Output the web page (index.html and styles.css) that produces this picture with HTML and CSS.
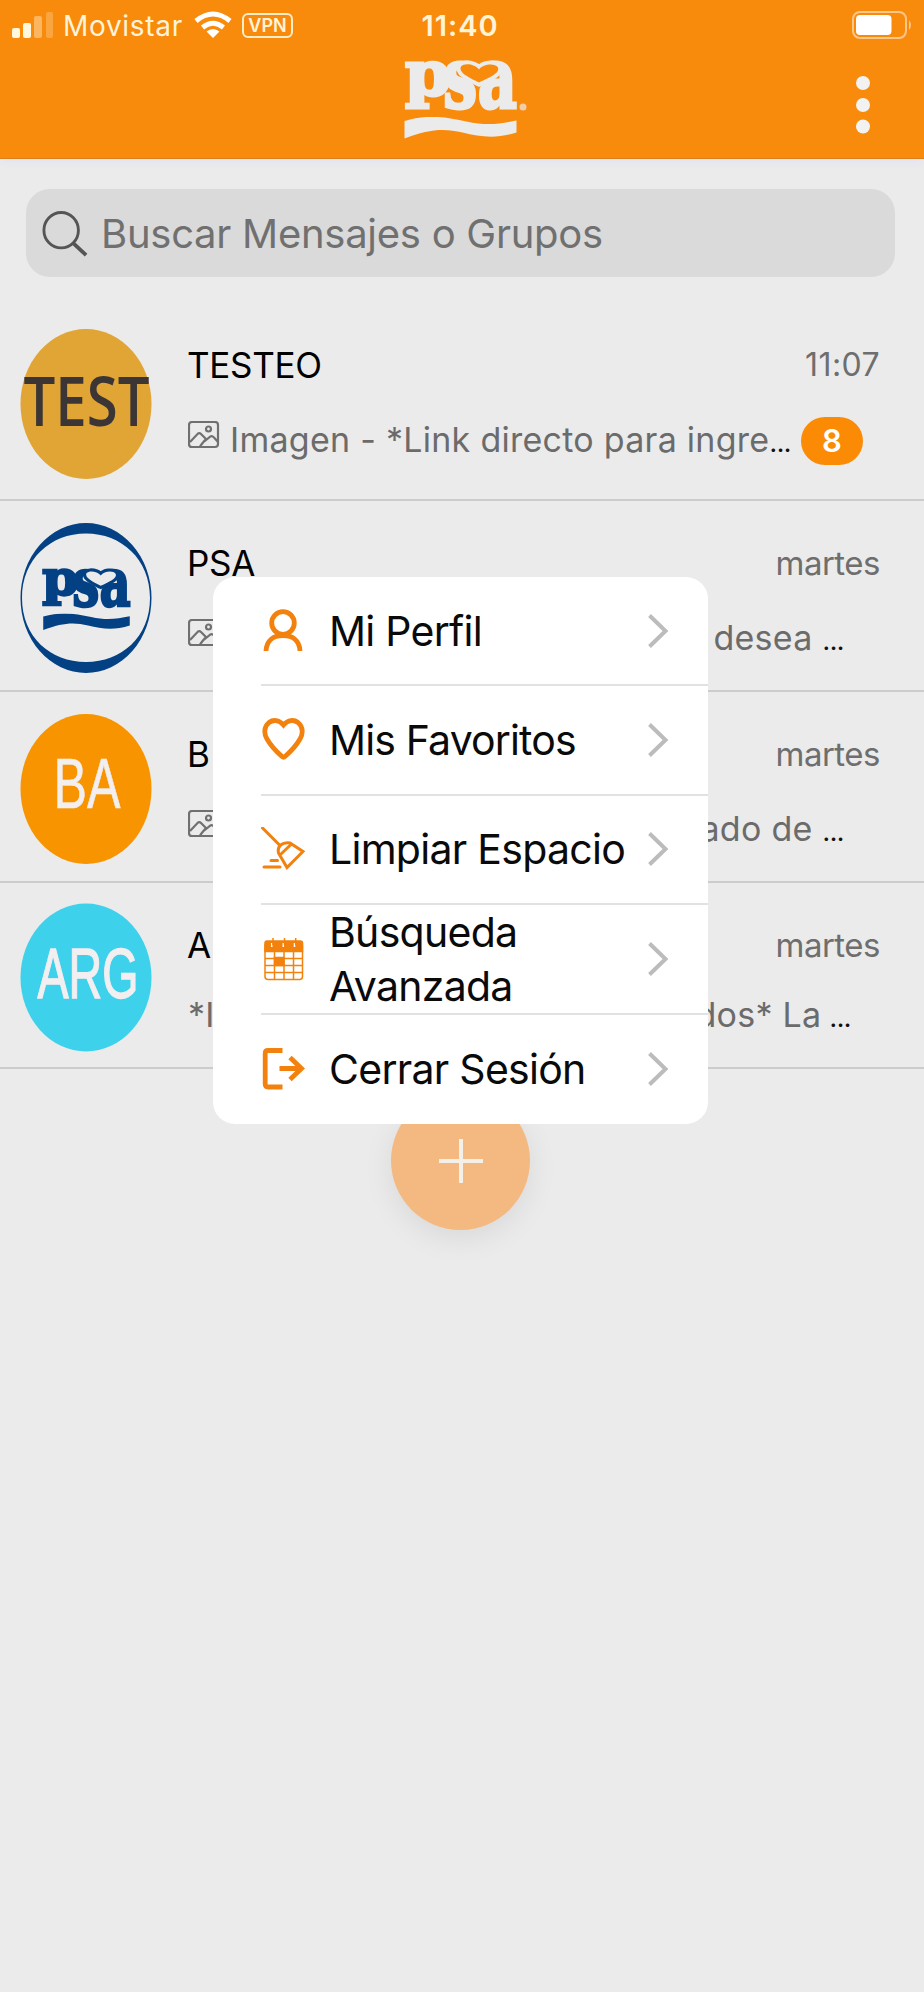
FILE: index.html
```html
<!DOCTYPE html>
<html lang="es">
<head>
<meta charset="utf-8">
<title>Mensajes</title>
<link rel="stylesheet" href="styles.css">
</head>
<body>
<svg width="0" height="0" class="defs">
  <symbol id="wave" viewBox="0 0 112 22"><path d="M0 4C22 -3 42 0 62 4.500S95 7 112 3.500V15.500C92 22 76 20 58 15.500S24 12 0 21.500Z"/></symbol>
  <symbol id="picture" viewBox="0 0 32 28"><g fill="none" stroke="#707070" stroke-width="2.200"><rect x="1" y="1" width="29" height="25" rx="3"/><circle cx="20.500" cy="8" r="2.500"/><path d="M2 21L10 12.500Q11.500 11.500 13 13L18 18L15 21.500Q13 24 12 25.500M15 21.500L22.500 15.500Q24 14.500 26 16.500L30 21"/></g></symbol>
  <symbol id="chevron" viewBox="0 0 22 36"><path d="M2.500 2.500L18.500 18L2.500 33.500" fill="none" stroke="#bcbcbc" stroke-width="4"/></symbol>
</svg>
<div class="screen">
  <header class="header">
    <div class="status">
      <div class="status-left">
        <svg class="signal" width="41" height="26" fill="#fff8dc"><rect y="16" width="8" height="10" rx="2"/><rect x="11" y="11" width="8" height="15" rx="2"/><rect x="22" y="4" width="8" height="22" rx="2" opacity=".4"/><rect x="34" y="0" width="7" height="26" rx="2" opacity=".25"/></svg>
        <span class="carrier">Movistar</span>
        <svg class="wifi" width="38" height="28" viewBox="0 0 38 28" fill="none" stroke="#fff" stroke-width="5"><path d="M2 10Q19 -4 36 10"/><path d="M8.500 16.500Q19 8 29.500 16.500"/><path d="M19 27L12.500 20.500Q19 15.500 25.500 20.500Z" fill="#fff" stroke="none"/></svg>
        <span class="vpn">VPN</span>
      </div>
      <span class="clock">11:40</span>
      <svg class="battery" width="59" height="28" viewBox="0 0 59 28"><rect x="1" y="1" width="53" height="26" rx="7" fill="none" stroke="#ffc68a" stroke-width="2"/><rect x="4" y="4" width="35.500" height="20" rx="4" fill="#fff"/><path d="M57 9Q61 14 57 19Z" fill="#ffc68a"/></svg>
    </div>
    <div class="brand">
      <svg class="logo" width="124" height="80" viewBox="0 0 124 80" fill="#ebebeb">
        <g class="wordmark light" transform="translate(0 -1.500)">
          <text class="p" x="1" y="37" textLength="46" lengthAdjust="spacingAndGlyphs">p</text>
          <text class="sa" x="39" y="50" textLength="74" lengthAdjust="spacingAndGlyphs">sa</text>
          <path class="heart" d="M75 25C65 20 54 15 57 9C61 5 71 7 75 12C79 7 90 5 94 10C96 16 85 20 75 25Z"/>
        </g>
        <circle cx="119" cy="48" r="3.500" opacity=".7"/>
        <use href="#wave" x="0" y="58" width="113" height="22"/>
      </svg>
      <svg class="dots" width="16" height="60" fill="#f2f2f2"><circle cx="8" cy="8" r="7"/><circle cx="8" cy="30" r="7"/><circle cx="8" cy="51.500" r="7"/></svg>
    </div>
  </header>

  <div class="search">
    <svg width="46" height="46" viewBox="0 0 48 48" fill="none" stroke="#555" stroke-width="3"><ellipse cx="20" cy="20" rx="18" ry="18.500"/><path d="M32 33L46 46" stroke-width="4"/></svg>
    <span class="placeholder">Buscar Mensajes o Grupos</span>
  </div>

  <main class="list">
    <article class="row first">
      <svg class="avatar" viewBox="0 0 131 150"><ellipse cx="65.500" cy="75" rx="65.500" ry="75" fill="#e0a535"/><text class="av-test" x="3" y="97" textLength="126" lengthAdjust="spacingAndGlyphs">TEST</text></svg>
      <div class="body">
        <div class="top"><span class="name">TESTEO</span><time class="hour">11:07</time></div>
        <div class="preview"><svg class="pic"><use href="#picture"/></svg><span class="message">Imagen - *Link directo para ingre<b>...</b></span><span class="badge">8</span></div>
      </div>
    </article>
    <article class="row">
      <svg class="avatar" viewBox="0 0 131 150"><path fill="#034184" fill-rule="evenodd" d="M65.500 0A65.500 75 0 0 1 65.500 150A65.500 75 0 0 1 65.500 0ZM65.500 10.500C30 10.500 1.500 36 1.500 75S30 139 65.500 139S129.500 114 129.500 75S101 10.500 65.500 10.500Z"/>
        <g class="wordmark navy" transform="translate(21 43) scale(.79)">
          <text class="p" x="1" y="37" textLength="46" lengthAdjust="spacingAndGlyphs">p</text>
          <text class="sa" x="39" y="50" textLength="74" lengthAdjust="spacingAndGlyphs">sa</text>
          <path class="heart" d="M75 25C65 20 54 15 57 9C61 5 71 7 75 12C79 7 90 5 94 10C96 16 85 20 75 25Z"/>
        </g>
        <use href="#wave" x="21" y="90.500" width="90" height="17" fill="#034184"/>
      </svg>
      <div class="body">
        <div class="top"><span class="name">PSA</span><time>martes</time></div>
        <div class="preview"><svg class="pic"><use href="#picture"/></svg><span class="tail">desea <b>...</b></span></div>
      </div>
    </article>
    <article class="row">
      <svg class="avatar" viewBox="0 0 131 150"><ellipse cx="65.500" cy="75" rx="65.500" ry="75" fill="#f79400"/><text class="av-thin" x="33" y="94" textLength="67" lengthAdjust="spacingAndGlyphs">BA</text></svg>
      <div class="body">
        <div class="top"><span class="name">B</span><time>martes</time></div>
        <div class="preview"><svg class="pic"><use href="#picture"/></svg><span class="tail">ado de <b>...</b></span></div>
      </div>
    </article>
    <article class="row last">
      <svg class="avatar" viewBox="0 0 131 150"><ellipse cx="65.500" cy="74.500" rx="65.500" ry="74" fill="#3dd1eb"/><text class="av-thin bold" x="17" y="94.500" textLength="101" lengthAdjust="spacingAndGlyphs">ARG</text></svg>
      <div class="body">
        <div class="top"><span class="name">A</span><time>martes</time></div>
        <div class="preview"><span>*I</span><span class="tail">dos* La<b class="close">...</b></span></div>
      </div>
    </article>
  </main>

  <button class="fab" aria-label="Nuevo"><svg width="46" height="46" stroke="#f4efe9" stroke-width="4"><path d="M1 23H45M23 1V45"/></svg></button>

  <nav class="menu">
    <a class="item"><svg class="icon" viewBox="0 0 44 44"><circle cx="22" cy="14" r="11.300"/><path d="M5 42C5.500 31 13 26.500 22 26.500S38.500 31 39 42"/></svg><span class="label">Mi Perfil</span><svg class="chev"><use href="#chevron"/></svg></a>
    <a class="item"><svg class="icon" viewBox="0 0 44 44"><path d="M22.500 7C18 1.500 12 1.500 8 4.500C2.500 9 3 16 6 21C10 28 17 35 21 38.500Q22.500 39.800 24 38.500C28 35 35 28 39 21C42 16 42.500 9 37 4.500C33 1.500 27 1.500 22.500 7Z"/></svg><span class="label tight">Mis Favoritos</span><svg class="chev"><use href="#chevron"/></svg></a>
    <a class="item"><svg class="icon thin" viewBox="0 0 44 44"><path d="M1.500 1L19 18.500M17.500 26C16 19 21 15 29 16L42 24.500L26 40.500ZM19.500 27.500L30.500 17M10 33.500H16.500M3 40H19"/></svg><span class="label">Limpiar Espacio</span><svg class="chev"><use href="#chevron"/></svg></a>
    <a class="item"><svg class="icon cal" viewBox="0 0 44 44"><rect x="4" y="6" width="37.500" height="36.500" rx="3"/><path class="solid" d="M4 14.500V6Q4 4 6 4H39.500Q41.500 4 41.500 6V14.500Z"/><path d="M4 21.500H41.500M4 28.500H41.500M4 35.500H41.500M13.500 14V42M23 14V42M32.500 14V42"/><rect class="solid" x="13.500" y="20.500" width="9.500" height="8"/><path class="rings" d="M10.700 6V10M22.300 6V10M33.500 6V10"/><path d="M12 1V8M23.500 1V8M34.700 1V8"/></svg><span class="label">Búsqueda<br>Avanzada</span><svg class="chev"><use href="#chevron"/></svg></a>
    <a class="item"><svg class="icon" viewBox="0 0 44 44"><path d="M21.500 3.500H7Q4.200 3.500 4.200 6.500V37Q4.200 40 7 40H21.500M18.500 21.500H40M29 10.500L40.500 21.500L29 32.500"/></svg><span class="label">Cerrar Sesión</span><svg class="chev"><use href="#chevron"/></svg></a>
  </nav>
</div>
</body>
</html>
```
FILE: styles.css
```css
* { box-sizing: border-box; }
body { margin: 0; background: #fff; font-family: Inter, "Liberation Sans", sans-serif; }
svg { display: block; flex: none; }
.defs { position: absolute; }
.screen { position: relative; width: 924px; height: 1992px; background: #ebebeb; overflow: hidden; }

.header { height: 159px; background: #f88a0c; border-bottom: 1px solid #dd7f1c; box-shadow: 0 3px 8px #e2e2f2; }
.status { display: grid; grid-template-columns: 1fr auto 1fr; align-items: center; height: 52px; padding: 0 13px 2px 12px; color: #fff3d8; }
.status-left { display: flex; align-items: center; }
.carrier { margin: 2px 0 0 10px; width: 120px; font-size: 28px; line-height: 34px; letter-spacing: .7px; white-space: nowrap; }
.wifi { margin-left: 11px; }
.vpn { margin-left: 10px; width: 51px; height: 25px; border: 2px solid #ffedc8; border-radius: 6px; font-size: 18px; font-weight: 600; line-height: 22px; text-align: center; }
.clock { margin: 2px 3px 0 0; font-size: 29px; font-weight: 600; line-height: 34px; letter-spacing: 1px; }
.battery { justify-self: end; }
.brand { display: grid; grid-template-columns: 1fr auto 1fr; padding: 7px 53px 0 53px; }
.logo { grid-column: 2; margin-left: 7px; overflow: visible; }
.dots { justify-self: end; margin-top: 16px; }
.wordmark { stroke-width: 3; font-family: "DejaVu Serif", serif; font-weight: bold; }
.wordmark.light { fill: #ebebeb; stroke: #ebebeb; }
.wordmark.navy { fill: #034184; stroke: #034184; }
.wordmark .p { font-size: 62px; }
.wordmark .sa { font-size: 86px; }
.wordmark .heart { stroke-width: 8; paint-order: stroke; }
.light .heart { fill: #f88a0c; }
.navy .heart { fill: #ebebeb; }

.search { display: flex; align-items: center; gap: 13px; width: 869px; height: 88px; margin: 30px 0 0 26px; padding: 2px 0 0 16px; border-radius: 24px; background: #dadada; }
.placeholder { font-size: 40px; line-height: 48px; letter-spacing: -.27px; color: #707070; }

.list { margin-top: 24px; }
.row { display: flex; height: 191px; padding: 22px 44px 0 20px; border-bottom: 2px solid #ccc; }
.row.first { height: 200px; padding-top: 28px; }
.row.last { height: 186px; padding-top: 20px; }
.avatar { width: 132px; height: 150px; overflow: visible; }
.body { flex: 1; margin: 18px 0 0 36px; }
.first .body { margin-top: 14px; }
.last .body { margin-top: 20px; }
.top, .preview { display: flex; justify-content: space-between; height: 44px; line-height: 44px; white-space: nowrap; }
.name { margin-left: -1px; font-size: 35px; letter-spacing: -.3px; color: #000; }
time { font-size: 33px; letter-spacing: -.5px; color: #6e6e6e; }
.hour { font-size: 32px; letter-spacing: .4px; }
.preview { margin-top: 31px; padding-right: 36px; font-size: 34px; letter-spacing: .27px; color: #6b6b6b; }
.first .preview { margin-top: 31px; padding-right: 17px; }
.last .preview { margin-top: 26px; padding-right: 29px; }
.preview b { font-size: 25px; font-weight: 500; letter-spacing: -.4px; color: #111; }
.preview b.close { margin-left: 8px; }
.pic { width: 32px; height: 28px; margin-top: 3px; }
.message { margin-left: 10px; flex: 1; }
.badge { width: 62px; height: 48px; margin-top: -1px; border-radius: 24px; background: #fb8a05; color: #fff; font-size: 31px; font-weight: 600; line-height: 48px; text-align: center; }
.av-test { font: 600 68px "Open Sans", sans-serif; fill: #3b3535; }
.av-thin { font: 70px "Liberation Sans", sans-serif; fill: #f3eef0; stroke: #f3eef0; stroke-width: .6; }
.av-thin.bold { stroke-width: 1.4; }

.fab { position: absolute; left: 391px; top: 1091px; width: 139px; height: 139px; padding: 0; border: 0; border-radius: 50%; background: #f3b981; display: grid; place-items: center; box-shadow: 0 8px 30px rgba(0, 0, 0, .08); }
.menu { position: absolute; left: 213px; top: 577px; width: 495px; height: 547px; border-radius: 22px; background: #fff; display: grid; grid-template-rows: repeat(5, 1fr); overflow: hidden; }
.item { display: flex; align-items: center; margin-left: 48px; padding-right: 39px; border-bottom: 2px solid #e2e2e2; color: #0a0a0a; }
.item:last-child { border-bottom: 0; }
.icon { width: 44px; height: 44px; fill: none; stroke: #f2820d; stroke-width: 4.800; }
.icon.thin { stroke-width: 3; stroke-linecap: round; }
.icon.cal { stroke-width: 1.500; }
.icon .solid { fill: #f2820d; }
.icon .rings { stroke: #fff; }
.label { flex: 1; margin-left: 24px; font-size: 41px; line-height: 54px; letter-spacing: -.72px; white-space: nowrap; }
.label.tight { letter-spacing: -.85px; }
.chev { width: 22px; height: 36px; }
```
